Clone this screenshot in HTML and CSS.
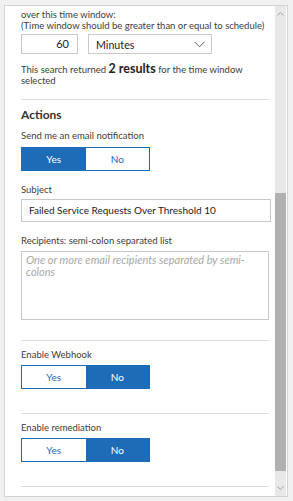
FILE: index.html
```html
<!DOCTYPE html>
<html lang="en">
<head>
  <meta charset="UTF-8">
  <title>Alert rule</title>
  <link rel="stylesheet" href="styles.css">
</head>
<body>

  <div class="panel">
    <div class="content">

      <p class="note">over this time window:<br>(Time window should be greater than or equal to schedule)</p>

      <div class="window-row">
        <div class="num-input">60</div>
        <div class="select">
          <span>Minutes</span>
          <svg width="11" height="7" viewBox="0 0 11 7"><path d="M0.5 0.8 L5.5 5.8 L10.5 0.8" fill="none" stroke="#555" stroke-width="1"/></svg>
        </div>
      </div>

      <p class="result">This search returned <b>2 results</b> for the time window<br>selected</p>

      <hr class="divider first">

      <h3>Actions</h3>
      <div class="label tight">Send me an email notification</div>
      <div class="toggle">
        <span class="on">Yes</span>
        <span>No</span>
      </div>

      <div class="label">Subject</div>
      <div class="text-input">Failed Service Requests Over Threshold 10</div>

      <div class="label">Recipients: semi-colon separated list</div>
      <div class="textarea">One or more email recipients separated by semi-colons</div>

      <hr class="divider">

      <div class="label after-rule">Enable Webhook</div>
      <div class="toggle">
        <span>Yes</span>
        <span class="on">No</span>
      </div>

      <hr class="divider">

      <div class="label after-rule">Enable remediation</div>
      <div class="toggle">
        <span>Yes</span>
        <span class="on">No</span>
      </div>

      <hr class="divider">

    </div>

    <div class="scrollbar">
      <svg class="arrow" width="7" height="4" viewBox="0 0 7 4"><path d="M0.5 3.5 L3.5 0.5 L6.5 3.5" fill="none" stroke="#a0a0a0" stroke-width="1"/></svg>
      <div class="track">
        <div class="thumb"></div>
      </div>
      <svg class="arrow" width="7" height="4" viewBox="0 0 7 4"><path d="M0.5 0.5 L3.5 3.5 L6.5 0.5" fill="none" stroke="#a0a0a0" stroke-width="1"/></svg>
    </div>
  </div>

</body>
</html>
```

FILE: styles.css
```css
body {
  margin: 0;
  padding: 5px 5px 4px 4px;
  background-color: #f0f0f0;
  font-family: 'Lato', sans-serif;
  font-size: 9.5px;
  color: #3c3c3c;
}

.panel {
  display: flex;
  height: 490px;
  background-color: #ffffff;
  border: 1px solid #d4d4d4;
  overflow: hidden;
}

.content {
  flex: 1;
  padding: 0 4px 0 16px;
}

.note {
  margin: 3px 0 0 0;
  line-height: 11px;
  white-space: nowrap;
}

.window-row {
  display: flex;
  gap: 10px;
  margin-top: 3px;
}

.num-input {
  width: 47px;
  height: 18px;
  border: 1px solid #c8c8c8;
  text-align: right;
  padding-right: 8px;
  font-size: 11px;
  line-height: 18px;
  color: #222;
}

.select {
  width: 109px;
  height: 18px;
  border: 1px solid #c8c8c8;
  padding: 0 6px 0 7px;
  display: flex;
  align-items: center;
  justify-content: space-between;
  font-size: 10.7px;
  color: #222;
}

.result {
  margin: 10px 0 0 0;
  line-height: 11px;
  white-space: nowrap;
}

.result b {
  font-size: 12.5px;
  font-weight: 700;
  line-height: 10px;
  color: #222;
}

.divider {
  border: none;
  border-top: 1px solid #dcdcdc;
  margin: 20px 0 0 0;
  width: 248px;
}

.divider.first {
  margin-top: 13px;
}

h3 {
  margin: 6px 0 0 0;
  font-size: 12px;
  font-weight: 700;
  color: #333;
  line-height: 18px;
}

.label {
  margin-top: 12px;
  line-height: 14px;
}

.label.tight {
  margin-top: 5px;
}

.label.after-rule {
  margin-top: 7px;
}

.toggle + .divider {
  margin-top: 24px;
}

.toggle {
  display: flex;
  width: 127px;
  height: 22px;
  border: 1px solid #1e6bb8;
  margin-top: 4px;
}

.after-rule + .toggle {
  margin-top: 3px;
}

.toggle span {
  flex: 1;
  display: flex;
  align-items: center;
  justify-content: center;
  font-size: 10px;
  color: #1e6bb8;
  background-color: #fff;
}

.toggle span.on {
  background-color: #1e6bb8;
  color: #ffffff;
}

.text-input {
  margin-top: 2px;
  height: 21px;
  border: 1px solid #c8c8c8;
  padding-left: 7px;
  font-size: 10px;
  line-height: 21px;
  color: #222;
}

.textarea {
  margin-top: 3px;
  width: 238px;
  height: 63px;
  border: 1px solid #c8c8c8;
  padding: 2px 4px;
  font-style: italic;
  font-size: 11px;
  line-height: 12px;
  color: #a8a8a8;
}

.scrollbar {
  width: 11px;
  margin-right: 1px;
  background-color: #e8e8e8;
  display: flex;
  flex-direction: column;
  align-items: center;
}

.arrow {
  flex: none;
  margin: 6px 0;
}

.track {
  flex: 1;
  width: 100%;
  display: flex;
  flex-direction: column;
  padding-top: 171px;
  padding-bottom: 9px;
}

.thumb {
  flex: 1;
  background-color: #b0b0b0;
}
```
